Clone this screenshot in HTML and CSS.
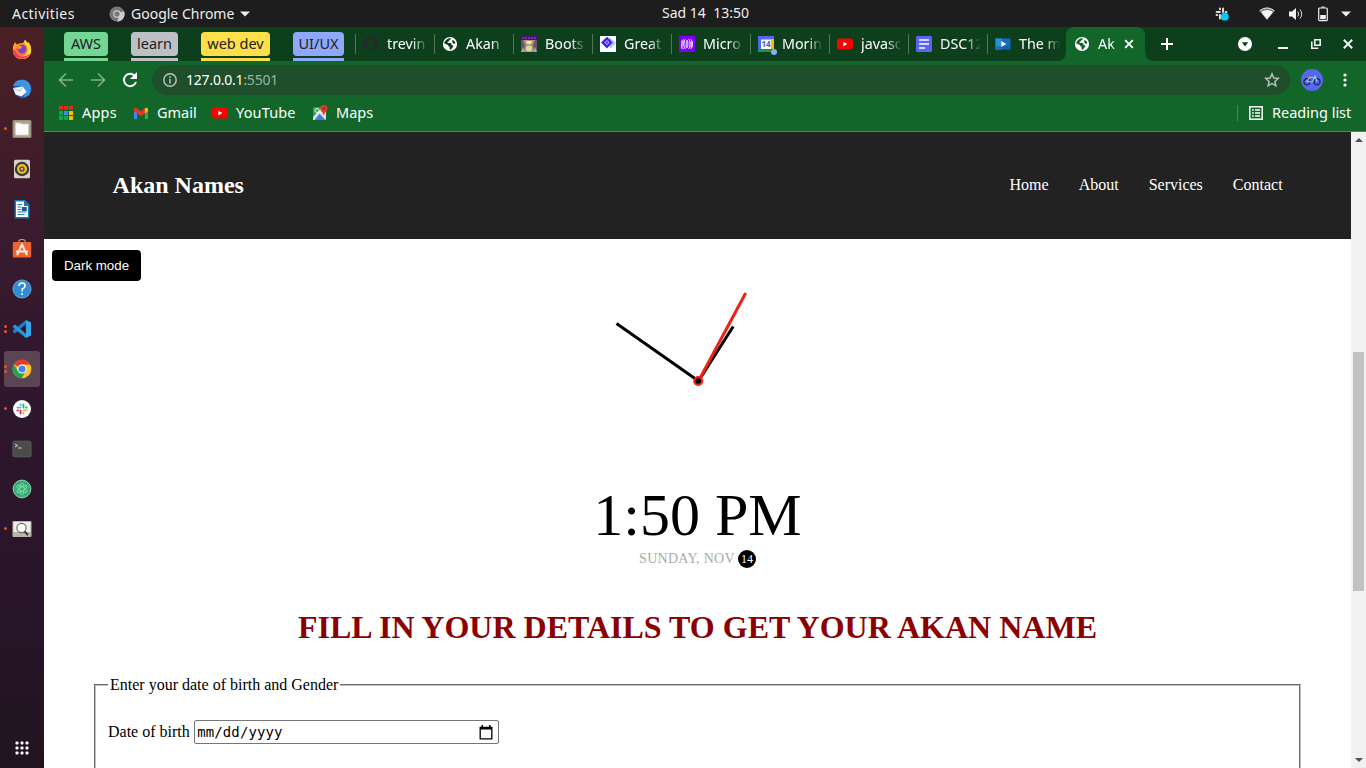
FILE: index.html
```html
<!DOCTYPE html>
<html lang="en">
<head>
<meta charset="utf-8">
<title>Akan Names</title>
<link rel="stylesheet" href="styles.css">
</head>
<body>
<svg class="defs" aria-hidden="true">
  <symbol id="globe" viewBox="0 0 16 16"><circle cx="8" cy="8" r="7.1" fill="#fff"/><path d="M2 7.3C3.1 4.4 5 2.3 8.6 2c.7 1-.2 1.8-1.300 2.200-.1 1.500-1 1.500-1.700 1.700l.2 1.100h2.600c1 .1 1.300 1 1.200 1.900l1.400.5c.6 1 .1 1.700-.6 2.200-.5 1.400-1.400 2.100-2.700 2.200l-.2-3.300c-1-.2-1.400-.7-1.600-1.600z" fill="var(--land,#0e3f1c)"/><path d="M10.200 4l2.300 1 .9 2.300-1.500.6-1.600-1.400z" fill="var(--land,#0e3f1c)"/></symbol>
  <symbol id="youtube" viewBox="0 0 16 16"><rect y="2.600" width="16" height="11" rx="2.800" fill="#f00"/><path d="M6.300 5.800v4.600l4-2.300z" fill="#fff"/></symbol>
  <symbol id="chrome" viewBox="0 0 20 20"><circle cx="10" cy="10" r="9.300" fill="#fbc52c"/><path d="M10 10L1.900 5.300A9.300 9.300 0 0 1 18.100 5.500H10z" fill="#e33b2e"/><path d="M1.900 5.300A9.300 9.300 0 0 0 9.600 19.300L14 12 10 10 6 12.200z" fill="#26a350"/><circle cx="10" cy="10" r="4.600" fill="#fff"/><circle cx="10" cy="10" r="3.600" fill="#4286f4"/></symbol>
  <symbol id="slack" viewBox="0 0 16 16"><g stroke-width="2.500" stroke-linecap="round" fill="none"><path d="M2 6.200h4M6.100 2v.8" stroke="var(--a,#36c5f0)"/><path d="M9.900 2v4.100M13.200 6.100h.8" stroke="var(--b,#2eb67d)"/><path d="M10 9.900h4M9.900 13.200v.8" stroke="var(--c,#ecb22e)"/><path d="M6.100 10v4M2 9.900h.8" stroke="var(--d,#e01e5a)"/></g></symbol>
</svg>

<div class="topbar">
  <span class="activities">Activities</span>
  <svg class="app-icon" viewBox="0 0 16 16"><circle cx="8" cy="8" r="7.600" fill="#777"/><path d="M8 8l7-3a7.600 7.600 0 0 1-7 10.600L11 9z" fill="#ccc"/><circle cx="8" cy="8" r="3.700" fill="#ddd"/><circle cx="8" cy="8" r="2.700" fill="#777"/></svg>
  <span class="app-name">Google Chrome</span>
  <svg class="caret" viewBox="0 0 10 6"><path d="M0 .5h10L5 5.500z" fill="#eee"/></svg>
  <span class="clock-label">Sad 14&nbsp; 13:50</span>
  <div class="tray">
    <svg class="t-slack" viewBox="0 0 16 16"><svg x="1" y="1" width="13" height="13" viewBox="0 0 16 16"><use href="#slack"/></svg><circle cx="10.800" cy="10.700" r="3.900" fill="#00cdfa"/></svg>
    <svg class="t-wifi" viewBox="0 0 16 14"><path d="M.5 4Q8-2 15.500 4L8 13z" fill="#777"/><path d="M2 5Q8 1.200 14 5L8 12.500z" fill="#f2f2f2"/><path d="M.5 3.800Q8-2 15.500 3.800" stroke="#eee" fill="none"/></svg>
    <svg class="t-sound" viewBox="0 0 16 14"><path d="M1 4.500h3L8 1v12L4 9.500H1z" fill="#f2f2f2"/><path d="M9.800 4.500q1.800 2.500 0 5M12 2.500q3.400 4.500 0 9" stroke="#ddd" fill="none"/></svg>
    <svg class="t-batt" viewBox="0 0 10 16"><path d="M3.500.5h3v1.200h-3z" fill="#eee"/><rect x=".7" y="2" width="8.600" height="12.700" rx="1" fill="none" stroke="#eee" stroke-width="1.200"/><path d="M2.200 9h5.600v4.200H2.200z" fill="#f2f2f2"/></svg>
    <svg class="caret" viewBox="0 0 10 6"><path d="M0 .5h10L5 5.500z" fill="#eee"/></svg>
  </div>
</div>

<div class="desktop">
  <nav class="dock">
    <div class="app"><svg viewBox="0 0 20 20"><path d="M3 3l2 2.500q3-2 6-1.500L13 .8l2 3 1.500-.6Q19.500 7 19.200 11.500A9.200 9.200 0 0 1 .8 11Q.8 6 3 3z" fill="#ff9a2a"/><path d="M13 .8q-1.500 3 1 5.500 3.500 5-.5 9Q11 17.500 7 17l5 2.300q7-1.500 7.200-8Q19.300 7 16.500 3.200L15.500 4z" fill="#ffd83a"/><path d="M.8 10.500Q1.500 19.500 10 19.800q6-.5 8-5-3.500 3-8 2.700T3.500 12z" fill="#f5306a"/><path d="M3 11q1.500 5.500 6.500 5.500t6-5.500q0 0-1-4-3-3-7-1z" fill="#ff6a2e"/><circle cx="10" cy="10" r="4.200" fill="#7543c8"/><path d="M4 7.500l4.500-.8 2 1.300-3.500 2.500z" fill="#ff9130"/></svg></div>
    <div class="app"><svg viewBox="0 0 20 20"><circle cx="10.500" cy="10" r="9" fill="#2260aa"/><path d="M1 7C3 1 9-.5 15 2c4 3 5 9 2 14l-6 3C16 11 12 6 1 7z" fill="#3f94df"/><path d="M1 9l10-1.500 3.500 5.500-5 4.500-6-2z" fill="#f4f7fc"/><path d="M1.500 9.500l6.500 2.700L11 8" stroke="#a7bcd3" fill="none"/></svg></div>
    <div class="app"><i class="dot"></i><svg viewBox="0 0 20 20"><rect x=".5" y="1" width="19" height="18" rx="1.500" fill="#8d8572"/><rect x="1.500" y="1.500" width="17" height="16.500" rx="1" fill="#aaa28d"/><path d="M3.500 4h5l1 1h7v11h-13z" fill="#fafafa" stroke="#d6d2c8" stroke-width=".8"/></svg></div>
    <div class="app"><svg viewBox="0 0 20 20"><rect x="2" y=".8" width="16" height="18.500" rx="1.500" fill="#d7d2c9"/><circle cx="10" cy="10" r="7.200" fill="#37383a"/><circle cx="10" cy="10" r="3.800" fill="#37383a" stroke="#f7bd20" stroke-width="2.400"/><circle cx="10" cy="10" r="1.500" fill="#cbb468"/></svg></div>
    <div class="app"><svg viewBox="0 0 20 20"><path d="M2.500 1H13l4.500 4.500v14h-15z" fill="#1879b5"/><path d="M4 2.500h8V7h4v11H4z" fill="#fff"/><path d="M5.500 5.500H10M5.500 8H9M5.500 10.500H9M5.500 13h9M5.500 15.500h7" stroke="#287fb8" stroke-width="1.200"/><path d="M9.800 8h5v4h-5z" fill="#1d5d8d"/></svg></div>
    <div class="app"><svg viewBox="0 0 20 20"><path d="M7 4V1.500q3-2 6 0V4" stroke="#a99787" fill="none" stroke-width="1.200"/><rect x=".8" y="3" width="18.400" height="15.500" rx="1" fill="#ed6432"/><path d="M5 16l5-10.500L15 16M4 12.500h12" fill="none" stroke="#ffe7d7" stroke-width="2"/></svg></div>
    <div class="app"><svg viewBox="0 0 20 20"><circle cx="10" cy="10" r="9.100" fill="#2f8dd8" stroke="#91b9d7" stroke-width=".7"/><path d="M7 7q0-3 3-3t3 2.500-2.800 3.500v2.500" stroke="#fff" stroke-width="1.500" fill="none"/><circle cx="10" cy="15" r="1" fill="#fff"/></svg></div>
    <div class="app"><i class="dot two"></i><svg viewBox="0 0 20 20"><path d="M14 1l5 2.500v13L14 19z" fill="#35a5ec"/><path d="M14 1v4L3 14.500 1 13v-1.500z" fill="#1a7fc7"/><path d="M1 7l2-1.500L14 15v4L1 8.500z" fill="#2794dc"/></svg></div>
    <div class="app selected"><i class="dot two"></i><svg viewBox="0 0 20 20"><use href="#chrome"/></svg></div>
    <div class="app"><i class="dot"></i><svg viewBox="0 0 20 20"><circle cx="10" cy="10" r="9" fill="#fff"/><g transform="translate(3.900 3.900) scale(.76)"><use href="#slack" width="16" height="16"/></g></svg></div>
    <div class="app"><svg viewBox="0 0 20 20"><rect x=".9" y="2.200" width="18.200" height="15.600" rx="1.500" fill="#4c4c4b" stroke="#626262" stroke-width=".8"/><path d="M3 5l2.500 1.500L3 8M6 9h3.500" stroke="#ddd" fill="none"/></svg></div>
    <div class="app"><svg viewBox="0 0 20 20"><circle cx="10" cy="10" r="8.900" fill="#31ad76" stroke="#b9d9b6" stroke-width=".8"/><g fill="none" stroke="#8fdcb6" stroke-width=".8"><ellipse cx="10" cy="10" rx="2.200" ry="5.800"/><ellipse cx="10" cy="10" rx="2.200" ry="5.800" transform="rotate(60 10 10)"/><ellipse cx="10" cy="10" rx="2.200" ry="5.800" transform="rotate(120 10 10)"/></g></svg></div>
    <div class="app"><i class="dot"></i><svg viewBox="0 0 20 20"><rect x=".5" y="2" width="19" height="16" rx="1" fill="#b9b5a7"/><path d="M1.500 3h17v10h-17z" fill="#eeede7"/><circle cx="9.500" cy="9" r="4.600" fill="#fff" stroke="#666" stroke-width="1.100"/><path d="M12.500 12.500l3.500 3.500" stroke="#333" stroke-width="1.800"/></svg></div>
    <svg class="grid-icon" viewBox="0 0 14 14"><g fill="#fff"><rect x=".5" y=".5" width="3" height="3" rx="1"/><rect x="5.500" y=".5" width="3" height="3" rx="1"/><rect x="10.500" y=".5" width="3" height="3" rx="1"/><rect x=".5" y="5.500" width="3" height="3" rx="1"/><rect x="5.500" y="5.500" width="3" height="3" rx="1"/><rect x="10.500" y="5.500" width="3" height="3" rx="1"/><rect x=".5" y="10.500" width="3" height="3" rx="1"/><rect x="5.500" y="10.500" width="3" height="3" rx="1"/><rect x="10.500" y="10.500" width="3" height="3" rx="1"/></g></svg>
  </nav>

  <div class="window">
    <div class="tabstrip">
      <div class="groups">
        <div class="group aws"><span>AWS</span></div>
        <div class="group learn"><span>learn</span></div>
        <div class="group webdev"><span>web dev</span></div>
        <div class="group uiux"><span>UI/UX</span></div>
      </div>
      <div class="tab"><svg viewBox="0 0 16 16"><path d="M5.500 14.500v-2.300q-2 .2-2.500-1.200M10.500 14.500v-3q2.500-.8 2.500-4 0-4.500-5-4.500T3 7.500q0 3.200 2.700 4M5.300 14.300A6.900 6.900 0 1 1 10.700 14.300" fill="none" stroke="#24292e" stroke-width="1.700"/></svg><span>trevin</span></div>
      <div class="tab"><svg viewBox="0 0 16 16"><use href="#globe"/></svg><span>Akan</span></div>
      <div class="tab"><svg viewBox="0 0 16 16"><path d="M0 0h16v16H0z" fill="#68517a"/><path d="M0 0h16v4H0z" fill="#481078"/><path d="M2 1v2m3-2v2m3-2v2m3-2v2m3-2v2" stroke="#9956c9"/><path d="M2 4h12l-2 5 1 7H3l1-7z" fill="#a69a68"/><path d="M5 5h6l-1 3H6z" fill="#ebe8b0"/><circle cx="8" cy="12.500" r="3" fill="#ded9a2"/><path d="M0 16l2-5 2 5zm12 0l2-5 2 5z" fill="#a9a5ad"/></svg><span>Boots</span></div>
      <div class="tab"><svg viewBox="0 0 16 16"><path d="M0 0h16v16H0z" fill="#fff"/><path d="M9 1l7 6-6 6z" fill="#b9c0ff"/><path d="M7 .8l5.600 5.800L7 12.400 1 6.600z" fill="#3e20ef"/><path d="M7 4l2.600 2.600L7 9.200 4.400 6.600z" fill="#9ab2ff"/><circle cx="7" cy="6.600" r="1" fill="#3e20ef"/></svg><span>Great</span></div>
      <div class="tab"><svg viewBox="0 0 16 16"><path d="M0 0h16v16H0z" fill="#8000ff"/><g fill="none" stroke="#e6ccff" stroke-width="1"><path d="M2.500 12.500V9Q2.500 3.500 4 3.500T6 8t-1.700 4.500-1.300-2Q5 3.500 6.500 3.500 8 3.500 8 8t1.500 4.500Q11 12.500 13 5.500q-.5-2-1.300-2Q10 3.500 10 8t1.700 4.500q1.800 0 1.800-4.500V5"/><path d="M8 8q0 4.500-1.500 4.500T3.500 5M8 8q0-4.500 1.500-4.500t3.300 8"/></g></svg><span>Micro</span></div>
      <div class="tab"><svg class="over" viewBox="0 0 16 16"><path d="M0 0h16v13H0z" fill="#4e69ed"/><path d="M3 3.500h10V13H3z" fill="#fff"/><path d="M13 3h3v10h-3z" fill="#fbbc04"/><path d="M0 13h13v3H0z" fill="#159947"/><text x="8" y="11" class="cal">14</text><circle cx="16" cy="16" r="3" fill="#8eabf7"/></svg><span>Morin</span></div>
      <div class="tab"><svg viewBox="0 0 16 16"><use href="#youtube"/></svg><span>javasc</span></div>
      <div class="tab"><svg viewBox="0 0 16 16"><rect width="16" height="16" rx="1.500" fill="#5865f7"/><path d="M3 4h10M3 8h10M3 12h6" stroke="#fff" stroke-width="1.600"/></svg><span>DSC12</span></div>
      <div class="tab"><svg viewBox="0 0 16 16"><path d="M.5 2.500h15v11H.5z" fill="#1769c7"/><path d="M.5 2.500h6v11h-6z" fill="#2496d7"/><path d="M.5 10h15v3.500H.5z" fill="#185ba8" opacity=".6"/><path d="M6.300 5v6l5-3z" fill="#fff"/></svg><span>The m</span></div>
      <div class="tab active"><svg viewBox="0 0 16 16"><use href="#globe"/></svg><span>Ak</span><svg class="x" viewBox="0 0 10 10"><path d="M1.200 1.200l7.600 7.600M8.800 1.200L1.200 8.800" stroke="#fff" stroke-width="1.800"/></svg></div>
      <svg class="plus" viewBox="0 0 12 12"><path d="M6 0v12M0 6h12" stroke="#fff" stroke-width="2"/></svg>
      <div class="controls">
        <svg width="14" viewBox="0 0 14 14"><circle cx="7" cy="7" r="7" fill="#fff"/><path d="M3.800 5.200h6.400L7 9.600z" fill="#0e3f1c"/></svg>
        <svg width="10" viewBox="0 0 10 14"><path d="M0 11h10" stroke="#eef3ef" stroke-width="2"/></svg>
        <svg width="10" viewBox="0 0 10 14"><path d="M3.800 2.800h5.400v5.400H3.800zM.8 4.500v6.800h6.500" fill="none" stroke="#eef3ef" stroke-width="1.600"/></svg>
        <svg width="10" viewBox="0 0 10 14"><path d="M.8 2.800l8.400 8.400M9.200 2.800L.8 11.200" stroke="#eef3ef" stroke-width="2"/></svg>
      </div>
    </div>

    <div class="toolbar">
      <svg class="nav-i" viewBox="0 0 16 16"><path d="M15 8H2M8 1.500L1.500 8 8 14.500" fill="none" stroke="#7fae8b" stroke-width="1.700"/></svg>
      <svg class="nav-i" viewBox="0 0 16 16"><path d="M1 8h13M8 1.500L14.500 8 8 14.500" fill="none" stroke="#7fae8b" stroke-width="1.700"/></svg>
      <svg class="nav-i" viewBox="0 0 16 16"><path d="M13.300 4.500A6.200 6.200 0 1 0 14 10" fill="none" stroke="#fff" stroke-width="2"/><path d="M15 0v7H8z" fill="#fff"/></svg>
      <div class="omnibox">
        <svg class="info" viewBox="0 0 14 14"><circle cx="7" cy="7" r="6.200" fill="none" stroke="#b9c8bd" stroke-width="1.400"/><path d="M7 6v4.500M7 3.300v1.600" stroke="#b9c8bd" stroke-width="1.500"/></svg>
        <span class="url">127.0.0.1<em>:5501</em></span>
        <svg class="star" viewBox="0 0 16 16"><path d="M8 1.800l1.800 4.200 4.500.4-3.400 3 1 4.400L8 11.500l-3.900 2.300 1-4.400-3.400-3 4.500-.4z" fill="none" stroke="#b9c8bd" stroke-width="1.400"/></svg>
      </div>
      <svg class="avatar" viewBox="0 0 22 22"><circle cx="11" cy="11" r="11" fill="#5568f5"/><g fill="none"><circle cx="6" cy="12.700" r="3" stroke="#263550" stroke-width="1.400"/><circle cx="16" cy="12.700" r="3" stroke="#263550" stroke-width="1.400"/><path d="M6 12.500L8.500 8.500h5.500L11 13zM14 7l2 5.500M13 7h2" stroke="#87d0f0" stroke-width="1.100"/><path d="M6.500 7.700h3" stroke="#e4614f" stroke-width="1.200"/></g></svg>
      <svg class="more" viewBox="0 0 4 14"><g fill="#fff"><circle cx="2" cy="2" r="1.600"/><circle cx="2" cy="7" r="1.600"/><circle cx="2" cy="12" r="1.600"/></g></svg>
    </div>

    <div class="bookmarks">
      <div class="bm apps"><svg viewBox="0 0 16 16"><path d="M1 1h4v3.500H1zM6 1h4v3.500H6zM11 1h4v3.500h-4z" fill="#f0281c"/><path d="M1 6h4v4H1zM1 11h4v4H1zM6 11h4v4H6z" fill="#13a74c"/><path d="M6 6h4v4H6z" fill="#4285f4"/><path d="M11 6h4v4h-4zM11 11h4v4h-4z" fill="#fbbc05"/></svg><span>Apps</span></div>
      <div class="bm gmail"><svg viewBox="0 0 16 16"><path d="M1 4h3.200v10H1z" fill="#4285f4"/><path d="M11.800 4H15v10h-3.200z" fill="#34a853"/><path d="M1 4.500Q1 1.500 4 3.200l4 3 4-3Q15 1.500 15 4.500V6l-7 5.200L1 6z" fill="#ea3325"/><path d="M11.800 3.300Q15 1.500 15 4.500V6l-3.200 2.400z" fill="#fbbc04"/></svg><span>Gmail</span></div>
      <div class="bm yt"><svg viewBox="0 0 16 16"><use href="#youtube"/></svg><span>YouTube</span></div>
      <div class="bm maps"><svg viewBox="0 0 16 16"><rect x="1" y="2" width="13" height="13" rx="1" fill="#dfe2e1"/><path d="M1 2h10L1 13z" fill="#22a45a"/><path d="M1 12L11 2l3 2L3 15H1z" fill="#e8eaea"/><path d="M7.500 8.500l6 6.500h-11z" fill="#3d7def"/><circle cx="5" cy="5.500" r="2" fill="none" stroke="#fff"/><path d="M11.800 0a3.500 3.500 0 0 1 3.500 3.500q0 2-2.200 4l-1.300 3-1.300-3q-2.200-2-2.200-4A3.500 3.500 0 0 1 11.800 0z" fill="#ea3929"/><circle cx="11.800" cy="3.500" r="1.200" fill="#9b2018"/></svg><span>Maps</span></div>
      <div class="reading"><svg viewBox="0 0 14 14"><rect x=".8" y=".8" width="12.400" height="12.400" fill="none" stroke="#fff" stroke-width="1.500"/><path d="M3 4h1.800M3 7h1.800M3 10h1.800M6 4h5M6 7h5M6 10h5" stroke="#fff" stroke-width="1.400"/></svg><span>Reading list</span></div>
    </div>

    <div class="viewport">
      <main class="page">
        <header class="site-header">
          <h2 class="brand">Akan Names</h2>
          <div class="links"><a>Home</a><a>About</a><a>Services</a><a>Contact</a></div>
        </header>
        <button class="dark-mode">Dark mode</button>
        <svg class="analog" viewBox="0 0 200 200"><g fill="none" stroke-width="3"><path d="M100.500 100L18.500 42.500M100.500 100L135.200 45.500" stroke="#000"/><path d="M100.500 100L147.700 12" stroke="#f02213"/></g><circle cx="100.200" cy="100" r="3.900" fill="#000" stroke="#f02213" stroke-width="2.200"/></svg>
        <div class="digital">1:50 PM</div>
        <div class="date"><span>SUNDAY, NOV</span> <b>14</b></div>
        <h1 class="prompt">FILL IN YOUR DETAILS TO GET YOUR AKAN NAME</h1>
        <fieldset class="details">
          <legend>Enter your date of birth and Gender</legend>
          <div class="row"><span>Date of birth</span><div class="date-field"><span>mm/dd/yyyy</span><svg viewBox="0 0 14 15"><path d="M1.200 2.500h11.600v11.300H1.200z" fill="none" stroke="#000" stroke-width="1.300"/><path d="M1 2h12v2.500H1zM2.500 0H4v2H2.500zM10 0h1.500v2H10z"/></svg></div></div>
        </fieldset>
      </main>
      <div class="scrollbar"><svg viewBox="0 0 8 4"><path d="M0 4l4-4 4 4z" fill="#505050"/></svg><div class="thumb"></div><svg viewBox="0 0 8 4"><path d="M0 0l4 4 4-4z" fill="#505050"/></svg></div>
    </div>
  </div>
</div>
</body>
</html>
```
FILE: styles.css
```css
* { box-sizing: border-box; }
body {
  margin: 0; width: 1366px; height: 768px; overflow: hidden;
  display: flex; flex-direction: column;
  font-family: "Noto Sans", "Open Sans", sans-serif; font-size: 14.5px;
}
svg { display: block; flex: none; }
.defs { position: absolute; width: 0; height: 0; }

.topbar {
  position: relative; flex: none; height: 27px; padding-left: 12px;
  display: flex; align-items: center;
  background: #1d1d1d; color: #eee; font-size: 14px; white-space: nowrap;
}
.activities { width: 97px; letter-spacing: .45px; }
.app-icon { width: 16px; height: 16px; margin-right: 6px; }
.app-name { width: 109px; }
.caret { width: 10px; height: 6px; }
.clock-label { position: absolute; left: 0; top: 3px; width: 1411px; text-align: center; line-height: 20px; }
.tray { margin-left: auto; display: flex; align-items: center; padding-right: 15px; }
.t-slack { width: 16px; height: 16px; margin-right: 29px; --a: #ddd; --b: #ddd; --c: #ddd; --d: #ddd; }
.t-wifi { width: 16px; height: 14px; margin-right: 13px; }
.t-sound { width: 16px; height: 14px; margin-right: 14px; }
.t-batt { width: 10px; height: 16px; margin-right: 13px; }

.desktop { flex: 1; min-height: 0; display: flex; }
.dock {
  width: 44px; flex: none; display: flex; flex-direction: column; align-items: center; padding-top: 4px;
  background: linear-gradient(#4a2023, #3a1b2e 28%, #30172d 45%, #28152a 78%, #21141e);
}
.app { position: relative; width: 36px; height: 36px; margin-bottom: 4px; display: grid; place-items: center; border-radius: 3px; }
.app > svg { width: 20px; height: 20px; }
.selected { background: #5b4454; }
.dot { position: absolute; left: 0; top: 16px; width: 3px; height: 3px; border-radius: 50%; background: #e95420; }
.two { top: 14px; box-shadow: 0 5px #e95420; }
.grid-icon { width: 14px; height: 14px; margin: auto 0 13px; }

.window { flex: 1; min-width: 0; display: flex; flex-direction: column; background: #12662a; color: #fff; }
.tabstrip { height: 34px; flex: none; display: flex; align-items: center; background: #0e3f1c; }
.groups { width: 311px; padding-left: 20px; display: flex; gap: 23px; flex: none; align-self: stretch; }
.group { height: 34px; padding-top: 5px; border-bottom: 3px solid; border-radius: 2px 2px 0 0; text-align: center; white-space: nowrap; }
.group span { display: block; height: 24px; line-height: 23px; border-radius: 4px; color: #202124; }
.aws { width: 44px; border-color: #74d695; } .aws span { background: #74d695; }
.learn { width: 47px; border-color: #bdc1c6; } .learn span { background: #bdc1c6; }
.webdev { width: 69px; border-color: #fcdf4b; } .webdev span { background: #fcdf4b; }
.uiux { width: 51px; border-color: #8fa8fb; } .uiux span { background: #8fa8fb; }
.group + .group { flex: none; }
.tab {
  flex: none; width: 79px; height: 20px; padding-left: 7px; display: flex; align-items: center;
  border-left: 1px solid #4e7959;
}
.tab svg { width: 16px; height: 16px; margin-right: 8px; }
.tab span {
  width: 41px; line-height: 20px; margin-top: -1px; overflow: hidden; white-space: nowrap; font-size: 14.3px;
  -webkit-mask-image: linear-gradient(90deg, #000 62%, transparent);
  mask-image: linear-gradient(90deg, #000 62%, transparent);
}
.tab .over { overflow: visible; }
.cal { font: bold 8px "Noto Sans", sans-serif; text-anchor: middle; fill: #4058c8; }
.tab.active {
  position: relative; height: 34px; border: 0; padding-left: 8px; background: #12662a; border-radius: 8px 8px 0 0;
  --land: #12662a;
}
.tab.active::before, .tab.active::after { content: ""; position: absolute; bottom: 0; width: 8px; height: 8px; }
.tab.active::before { left: -8px; background: radial-gradient(circle at 0 0, transparent 7.500px, #12662a 8px); }
.tab.active::after { right: -8px; background: radial-gradient(circle at 100% 0, transparent 7.500px, #12662a 8px); }
.tab.active span { width: 18px; margin-right: 8px; -webkit-mask-image: linear-gradient(90deg, #000 75%, #0008); mask-image: linear-gradient(90deg, #000 75%, #0008); }
.tab .x { width: 10px; height: 10px; margin: 0; }
.plus { width: 12px; height: 12px; margin-left: 16px; }
.controls { margin-left: auto; padding-right: 13px; display: flex; gap: 22.500px; }
.controls svg { height: 14px; }
.controls svg:first-child { margin-right: 3.500px; }

.toolbar { height: 38px; flex: none; display: flex; align-items: center; padding-left: 14px; }
.nav-i { width: 16px; height: 16px; margin-right: 16px; }
.nav-i:nth-child(3) { margin-right: 14px; }
.omnibox { width: 1138px; height: 30px; border-radius: 15px; background: #1e4f2a; display: flex; align-items: center; padding: 0 10px 0 11px; }
.info { width: 14px; height: 14px; margin-right: 9px; }
.url { font-size: 14px; letter-spacing: -.22px; margin-top: -2px; }
.url em { font-style: normal; color: #9bb3a1; }
.star { width: 16px; height: 16px; margin-left: auto; }
.avatar { width: 22px; height: 22px; margin-left: 11px; }
.more { width: 4px; height: 14px; margin-left: 20px; }

.bookmarks { height: 33px; flex: none; display: flex; padding-left: 14px; padding-bottom: 4px; border-bottom: 1px solid #4a8d5c; white-space: nowrap; }
.bm { display: flex; align-items: center; gap: 8px; }
.bm svg { width: 16px; height: 16px; }
.bm span, .reading span { margin-top: -2px; }
.apps { width: 75px; letter-spacing: .2px; } .gmail { width: 79px; } .yt { width: 100px; letter-spacing: .15px; }
.reading { margin: 6px 14px 6px auto; padding-left: 11px; border-left: 1px solid #438755; display: flex; align-items: center; gap: 9px; }
.reading svg { width: 14px; height: 14px; }
.reading span { width: 80px; }

.viewport { flex: 1; min-height: 0; display: flex; background: #fff; }
.page { flex: 1; min-width: 0; overflow: hidden; color: #000; font: 16px "Liberation Serif", "Times New Roman", serif; display: flex; flex-direction: column; }
.site-header { height: 107px; flex: none; padding: 0 68.400px 0 68.600px; display: flex; justify-content: space-between; align-items: center; background: #222; color: #fff; }
.brand { margin: 0; font-size: 24px; }
.links { display: flex; gap: 30px; margin-top: -2px; }
.dark-mode { align-self: flex-start; margin: 11px 0 0 8px; width: 89px; height: 31px; padding: 0; border: 0; border-radius: 4px; background: #000; color: #fff; font: 13.333px "Liberation Sans", Arial, sans-serif; flex: none; }
.analog { width: 200px; height: 200px; align-self: center; flex: none; }
.digital { height: 66px; flex: none; text-align: center; font-size: 60px; line-height: 68px; }
.date { height: 22px; margin-top: 1px; flex: none; display: flex; justify-content: center; align-items: center; gap: 3px; font-size: 14px; color: #aaa; letter-spacing: .3px; }
.date b { width: 18px; height: 18px; border-radius: 50%; background: #000; color: #fff; font-weight: normal; font-size: 12px; line-height: 18px; text-align: center; letter-spacing: 0; }
.prompt { margin: 39px 0 31px; flex: none; font-size: 32px; line-height: 36px; text-align: center; color: #8b0000; }
.details { margin: 0 50px; height: 180px; flex: none; padding: 0 12px; border: 2px groove #c0c0c0; }
.details legend { padding: 0 2px; }
.row { display: flex; align-items: center; gap: 4px; margin-top: 26px; }
.date-field { width: 305px; height: 24px; border: 1px solid #767676; border-radius: 2px; padding: 0 5px 0 2.500px; display: flex; align-items: center; justify-content: space-between; font: 14px "DejaVu Sans Mono", monospace; letter-spacing: .1px; }
.date-field svg { width: 14px; height: 15px; }
.scrollbar { width: 15px; background: #f1f1f1; display: flex; flex-direction: column; align-items: center; padding: 6px 0; }
.scrollbar svg { width: 8px; height: 4px; }
.thumb { width: 11px; height: 239px; margin: 210px 0 auto; background: #c1c1c1; }
```
